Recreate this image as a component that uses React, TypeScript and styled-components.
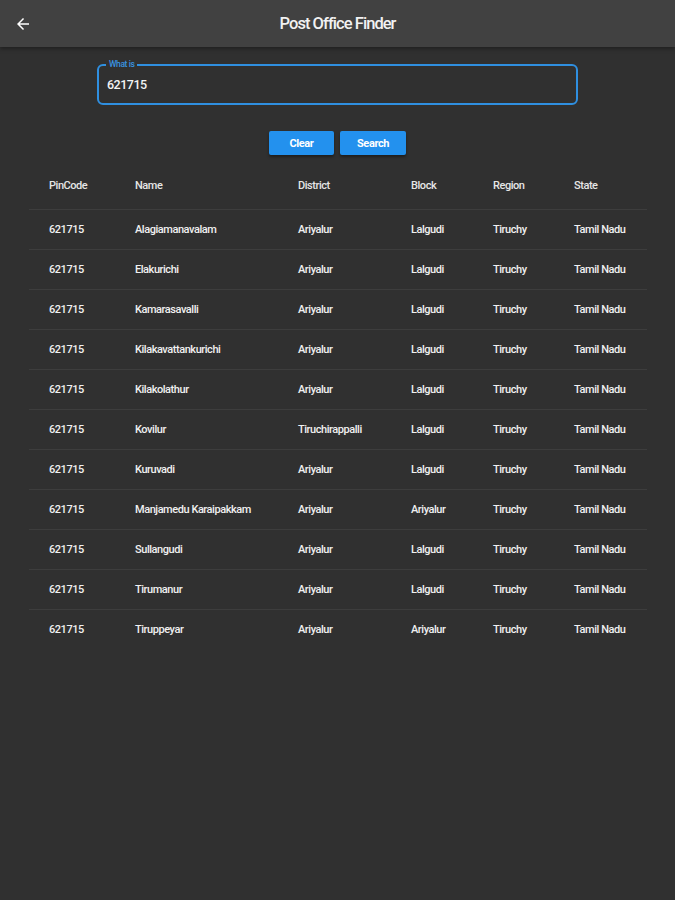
import React from 'react'
import styled, { createGlobalStyle } from 'styled-components'

const GlobalStyle = createGlobalStyle`
  html, body {
    margin: 0;
    padding: 0;
    background: #303030;
    font-family: Roboto, 'Liberation Sans', sans-serif;
  }
  #root {
    min-height: 900px;
    background: #303030;
  }
`

type Office = {
  pin: string
  name: string
  district: string
  block: string
  region: string
  state: string
}

const offices: Office[] = [
  { pin: '621715', name: 'Alagiamanavalam', district: 'Ariyalur', block: 'Lalgudi', region: 'Tiruchy', state: 'Tamil Nadu' },
  { pin: '621715', name: 'Elakurichi', district: 'Ariyalur', block: 'Lalgudi', region: 'Tiruchy', state: 'Tamil Nadu' },
  { pin: '621715', name: 'Kamarasavalli', district: 'Ariyalur', block: 'Lalgudi', region: 'Tiruchy', state: 'Tamil Nadu' },
  { pin: '621715', name: 'Kilakavattankurichi', district: 'Ariyalur', block: 'Lalgudi', region: 'Tiruchy', state: 'Tamil Nadu' },
  { pin: '621715', name: 'Kilakolathur', district: 'Ariyalur', block: 'Lalgudi', region: 'Tiruchy', state: 'Tamil Nadu' },
  { pin: '621715', name: 'Kovilur', district: 'Tiruchirappalli', block: 'Lalgudi', region: 'Tiruchy', state: 'Tamil Nadu' },
  { pin: '621715', name: 'Kuruvadi', district: 'Ariyalur', block: 'Lalgudi', region: 'Tiruchy', state: 'Tamil Nadu' },
  { pin: '621715', name: 'Manjamedu Karaipakkam', district: 'Ariyalur', block: 'Ariyalur', region: 'Tiruchy', state: 'Tamil Nadu' },
  { pin: '621715', name: 'Sullangudi', district: 'Ariyalur', block: 'Lalgudi', region: 'Tiruchy', state: 'Tamil Nadu' },
  { pin: '621715', name: 'Tirumanur', district: 'Ariyalur', block: 'Lalgudi', region: 'Tiruchy', state: 'Tamil Nadu' },
  { pin: '621715', name: 'Tiruppeyar', district: 'Ariyalur', block: 'Ariyalur', region: 'Tiruchy', state: 'Tamil Nadu' },
]

const Page = styled.div`
  display: flex;
  flex-direction: column;
  min-height: 900px;
  background: #303030;
`

const AppBar = styled.header`
  position: relative;
  height: 47px;
  background: #414141;
  display: flex;
  align-items: center;
  justify-content: center;
  box-shadow: 0 2px 4px rgba(0, 0, 0, 0.35);
`

const BackButton = styled.button`
  position: absolute;
  left: 13px;
  top: 14px;
  width: 20px;
  height: 20px;
  padding: 0;
  border: none;
  background: transparent;
  display: flex;
  align-items: center;
  justify-content: center;
`

const Title = styled.h1`
  margin: 0;
  font-size: 16.5px;
  font-weight: 500;
  color: #f2f2f2;
  letter-spacing: -0.95px;
`

const SearchForm = styled.section`
  display: flex;
  flex-direction: column;
  align-items: center;
  padding-top: 17px;
`

const Field = styled.div`
  position: relative;
  box-sizing: border-box;
  width: 481px;
  height: 41px;
  border: 2px solid #2f8fe0;
  border-radius: 6px;
  display: flex;
  align-items: center;
  padding-left: 8px;
`

const FieldLabel = styled.span`
  position: absolute;
  top: -7px;
  left: 7px;
  padding: 0 3px;
  background: #303030;
  color: #3a93e0;
  font-size: 8.5px;
  font-weight: 500;
  letter-spacing: -0.4px;
  line-height: 11px;
`

const FieldValue = styled.span`
  color: #f4f4f4;
  font-size: 12.5px;
  font-weight: 500;
  letter-spacing: -0.5px;
`

const Actions = styled.div`
  display: flex;
  gap: 6px;
  margin-top: 26px;
`

const ActionButton = styled.button<{ $width: number }>`
  width: ${(p) => p.$width}px;
  height: 24px;
  border: none;
  border-radius: 2px;
  background: #2391ee;
  color: #ffffff;
  font-family: Roboto, 'Liberation Sans', sans-serif;
  font-size: 11px;
  font-weight: 700;
  letter-spacing: -0.4px;
  box-shadow: 0 2px 3px rgba(0, 0, 0, 0.4);
`

const Table = styled.div`
  margin: 6px 28px 0 29px;
  display: flex;
  flex-direction: column;
`

const Row = styled.div<{ $header?: boolean }>`
  display: grid;
  grid-template-columns: 86px 163px 113px 82px 81px 1fr;
  align-items: center;
  padding-left: 20px;
  height: ${(p) => (p.$header ? 48 : 39)}px;
  border-top: ${(p) => (p.$header ? 'none' : '1px solid #3d3d3d')};
`

const Cell = styled.div<{ $header?: boolean }>`
  color: ${(p) => (p.$header ? '#e6e6e6' : '#f0f0f0')};
  font-size: 11px;
  font-weight: 500;
  letter-spacing: -0.45px;
  white-space: nowrap;
`

const ArrowBack = () => (
  <svg width="18" height="18" viewBox="0 0 24 24" fill="#ffffff">
    <path d="M20 11H7.83l5.59-5.59L12 4l-8 8 8 8 1.41-1.41L7.83 13H20v-2z" />
  </svg>
)

const headers = ['PinCode', 'Name', 'District', 'Block', 'Region', 'State']

export default function App() {
  return (
    <Page>
      <GlobalStyle />
      <AppBar>
        <BackButton aria-label="Back">
          <ArrowBack />
        </BackButton>
        <Title>Post Office Finder</Title>
      </AppBar>

      <SearchForm>
        <Field>
          <FieldLabel>What is</FieldLabel>
          <FieldValue>621715</FieldValue>
        </Field>
        <Actions>
          <ActionButton $width={65}>Clear</ActionButton>
          <ActionButton $width={66}>Search</ActionButton>
        </Actions>
      </SearchForm>

      <Table>
        <Row $header>
          {headers.map((h) => (
            <Cell $header key={h}>
              {h}
            </Cell>
          ))}
        </Row>
        {offices.map((o) => (
          <Row key={o.name}>
            <Cell>{o.pin}</Cell>
            <Cell>{o.name}</Cell>
            <Cell>{o.district}</Cell>
            <Cell>{o.block}</Cell>
            <Cell>{o.region}</Cell>
            <Cell>{o.state}</Cell>
          </Row>
        ))}
      </Table>
    </Page>
  )
}
